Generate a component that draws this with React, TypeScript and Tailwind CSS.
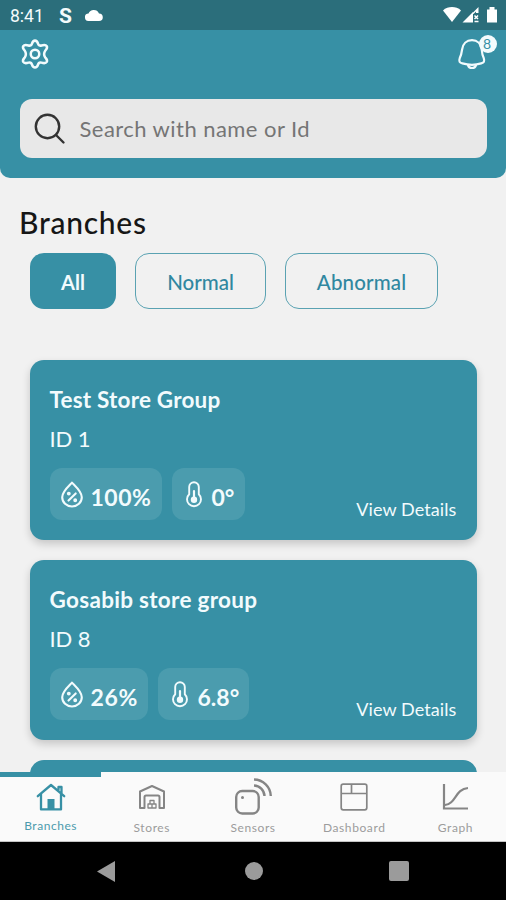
import type { ReactNode } from 'react';

function Gear() {
  return (
    <svg className="h-[32px] w-[32px]" viewBox="-0.5 -0.5 33 33" fill="none" stroke="#f2fbfd" strokeWidth="2.6" strokeLinejoin="round">
      <path d="M16 2.2 C17.8 2.2 18.6 3.6 19.1 5.2 C19.6 6.9 21 7.7 22.7 7.2 C25 6.5 27 6.1 28.1 7.9 C29.2 9.8 28 11 26.6 12.5 C25.2 14.6 25.2 17.6 26.6 19.6 C28 21.1 29.2 22.3 28.1 24.2 C27 26 25 25.6 22.7 24.9 C21 24.4 19.6 25.2 19.1 26.9 C18.6 28.5 17.8 29.9 16 29.9 C14.2 29.9 13.4 28.5 12.9 26.9 C12.4 25.2 11 24.4 9.3 24.9 C7 25.6 5 26 3.9 24.2 C2.8 22.3 4 21.1 5.4 19.6 C6.8 17.6 6.8 14.6 5.4 12.5 C4 11 2.8 9.8 3.9 7.9 C5 6.1 7 6.5 9.3 7.2 C11 7.7 12.4 6.9 12.9 5.2 C13.4 3.6 14.2 2.2 16 2.2Z" />
      <circle cx="16" cy="16" r="4.4" />
    </svg>
  );
}

function Bell() {
  return (
    <svg className="h-[32px] w-[30px]" viewBox="0 0 30 32" fill="none" stroke="#f2fbfd" strokeWidth="2.2" strokeLinejoin="round" strokeLinecap="round">
      <path d="M15 2.2C9.4 2.2 5.8 6.2 5.1 11.5C4.6 15.3 4 17.6 2.7 20.3C1.6 23.4 2.6 24.8 5.4 25.4C11 27 19 27 24.2 25.4C27 24.8 27.8 23.4 26.8 20.3C25.4 17.6 25 15.3 24.7 11.5C24 6.2 20.4 2.2 15 2.2Z" />
      <path d="M11 27C11.8 31 18.2 31 19 27" />
    </svg>
  );
}

function Drop() {
  return (
    <svg className="h-[27px] w-[22px] shrink-0" viewBox="0 0 22 27" fill="none" stroke="#f2fbfd" strokeWidth="2.1" strokeLinecap="round" strokeLinejoin="round">
      <path d="M11 1.6C7.8 5 1.2 10.4 1.2 16.2A9.8 9.3 0 0 0 20.8 16.2C20.8 10.4 14.2 5 11 1.6Z" />
      <path d="M7.5 19.6L14.7 12.4" />
      <circle cx="7.8" cy="12.6" r="0.9" />
      <circle cx="14.2" cy="19.3" r="0.9" />
    </svg>
  );
}

function Thermometer() {
  return (
    <svg className="h-[27px] w-[16px] shrink-0" viewBox="0 0 16 27" fill="none" stroke="#f2fbfd" strokeWidth="1.9" strokeLinecap="round">
      <path d="M3.2 6A4.8 4.8 0 0 1 12.8 6V13.2A7 7 0 1 1 3.2 13.2Z" />
      <path d="M8 10V18" strokeWidth="2.2" />
      <circle cx="8" cy="18.8" r="3.2" fill="#f2fbfd" stroke="none" />
    </svg>
  );
}

function Chip({ icon, className, children }: { icon: ReactNode; className: string; children: ReactNode }) {
  return (
    <div className={'flex h-[52px] items-center rounded-xl bg-[#4b9cae] ' + className}>
      {icon}
      <span className="pt-[5px] text-[23px] leading-6 font-bold">{children}</span>
    </div>
  );
}

function Card({ name, id, chips }: { name: ReactNode; id: string; chips?: ReactNode }) {
  return (
    <article className="flex h-[180px] shrink-0 flex-col rounded-[14px] bg-[#3790a5] px-5 pt-6 text-[#f2fbfd] shadow-[0_4px_9px_rgba(0,0,0,0.18)]">
      {name}
      <p className="mt-[10px] text-[22px] leading-[30px] tracking-[-0.1px]">{id}</p>
      <div className="mt-[14px] flex gap-[10px]">
        {chips}
        <span className="mt-[31px] ml-auto text-[18px] leading-5 tracking-[0.1px]">View Details</span>
      </div>
    </article>
  );
}

function Tab({ label, active, children }: { label: string; active?: boolean; children: ReactNode }) {
  return (
    <div className={active ? 'flex flex-1 flex-col items-center border-t-[5px] border-[#3790a5] text-[#3790a5]' : 'flex flex-1 flex-col items-center pt-[5px] text-[#858585]'}>
      <div className="flex h-[39px] items-center">{children}</div>
      <span className={active ? 'mt-[2px] text-[12px] leading-4 tracking-[0.55px] text-[#4c9bad]' : 'mt-1 text-[12px] leading-4 tracking-[0.6px] text-[#9c9c9c]'}>{label}</span>
    </div>
  );
}

export default function App() {
  return (
    <div className="flex h-[900px] w-[506px] flex-col overflow-hidden bg-[#f1f1f1] font-['Lato',sans-serif]">
      <header className="h-[178px] shrink-0 overflow-hidden rounded-b-[10px] bg-[#3790a5]">
        <div className="flex h-[30px] items-center bg-[#2b6e7b] pl-[10px] font-['Roboto',sans-serif] text-[#f4fbfc]">
          <span className="w-[49px] pt-[2px] text-[17.5px] leading-6">8:41</span>
          <span className="w-[26px] pt-px text-[21px] leading-6 font-bold">S</span>
          <svg className="h-[12px] w-[18px]" viewBox="0 0 18 12" fill="#fff"><path d="M3.8 12A3.7 3.7 0 0 1 3.5 4.6A5.7 5.7 0 0 1 14 4.4A3.8 3.8 0 0 1 14 12Z" /></svg>
          <svg className="ml-auto h-[18px] w-[63px]" viewBox="0 0 63 18" fill="#fff">
            <path d="M0 4.4C5 0 13 0 18 4.4L9 16Z" />
            <path d="M19.5 16.5L30 6V16.5Z" />
            <path d="M29 7.5L35.5 1V7H33V5.5L30.5 8Z" />
            <path d="M31.5 9.5L35 13M35 9.5L31.5 13M31.5 15.5H35.5" stroke="#fff" strokeWidth="1.5" />
            <path d="M44 3.5H46.5V1H51.5V3.5H54V16.5H44Z" />
          </svg>
        </div>
        <div className="flex h-[69px] items-start justify-between pt-2 pr-[19px] pl-[19px]">
          <Gear />
          <div className="relative">
            <Bell />
            <span className="absolute -top-[3px] left-[22px] flex h-[18px] w-[18px] items-center justify-center rounded-full bg-[#f2fbfd] pr-[2px] text-[14px] leading-none text-[#3790a5]">8</span>
          </div>
        </div>
        <div className="mx-[19.5px] flex h-[59px] items-center rounded-xl bg-[#e8e8e8] pl-[14px]">
          <svg className="h-[32px] w-[32px]" viewBox="0 0 32 32" fill="none" stroke="#333" strokeWidth="2.4" strokeLinecap="round"><circle cx="13.5" cy="13.5" r="11.7" /><path d="M22 22L29.5 29.5" /></svg>
          <span className="ml-[14px] text-[22px] leading-7 tracking-[0.45px] text-[#757575]">Search with name or Id</span>
        </div>
      </header>
      <main className="flex min-h-0 flex-1 flex-col overflow-hidden">
        <h1 className="mt-7 ml-[19px] shrink-0 text-[30px] leading-8 font-medium tracking-[0.75px] text-[#161616]">Branches</h1>
        <div className="mt-[15px] ml-[30px] flex shrink-0 gap-[19px] text-[20.5px] leading-6 text-[#3087a0]">
          <div className="flex h-[56px] w-[86px] items-center justify-center rounded-[14px] bg-[#3790a5] pt-[2px] text-[20px] font-bold text-[#f2fbfd]">All</div>
          <div className="flex h-[56px] w-[131px] items-center justify-center rounded-[14px] border border-[#5aa2b2] pt-[2px] font-medium">Normal</div>
          <div className="flex h-[56px] w-[153px] items-center justify-center rounded-[14px] border border-[#5aa2b2] pt-[2px] font-medium tracking-[0.15px]">Abnormal</div>
        </div>
        <section className="mx-[29.5px] mt-[51px] flex flex-col gap-5">
          <Card
            name={<h2 className="text-[22.5px] leading-[31px] -mb-px font-bold tracking-[0.2px]">Test Store Group</h2>}
            id="ID 1"
            chips={<>
              <Chip className="w-[112px] gap-[8px] pl-[11px] tracking-[0.5px]" icon={<Drop />}>100%</Chip>
              <Chip className="w-[73px] gap-[10px] pl-[14px]" icon={<Thermometer />}>0°</Chip>
            </>}
          />
          <Card
            name={<h2 className="text-[22.5px] leading-[31px] -mb-px font-bold tracking-[0.3px]">Gosabib store group</h2>}
            id="ID 8"
            chips={<>
              <Chip className="w-[98px] gap-[8px] pl-[11px] tracking-[0.6px]" icon={<Drop />}>26%</Chip>
              <Chip className="w-[91px] gap-[10px] pl-[14px]" icon={<Thermometer />}>6.8°</Chip>
            </>}
          />
          <div className="h-10 shrink-0 rounded-t-[14px] bg-[#3790a5]" />
        </section>
      </main>
      <nav className="flex h-[70px] shrink-0 border-b border-[#c4c4c4] bg-[#fafafa]">
        <Tab label="Branches" active>
          <svg className="h-[28px] w-[30px]" viewBox="0 0 30 28" fill="none" stroke="currentColor" strokeWidth="2.3" strokeLinecap="round" strokeLinejoin="round">
            <path d="M1.8 13.2L15 2L28.2 13.2M5 11V26.4H25V11M22.5 7V4H25.5V10" />
            <path d="M11.5 26V16H18.5V26Z" fill="currentColor" stroke="none" />
          </svg>
        </Tab>
        <Tab label="Stores">
          <svg className="h-[26px] w-[28px]" viewBox="0 0 28 26" fill="none" stroke="currentColor" strokeWidth="2" strokeLinejoin="round">
            <path d="M2 24V7.5L14 2L26 7.5V24H21.5V13.2Q21.5 11.5 20 11.5H8Q6.5 11.5 6.5 13.2V24Z" />
            <path d="M10 24.5V20H18V24.5M12 20V16.5H16V20M14 20V24M10 24H18" strokeWidth="1.3" />
          </svg>
        </Tab>
        <Tab label="Sensors">
          <svg className="h-[39px] w-[40px]" viewBox="0 0 40 39" fill="none" stroke="currentColor" strokeWidth="2.4">
            <rect x="3.2" y="14" width="22.5" height="22.5" rx="6" />
            <circle cx="9.5" cy="20.5" r="1.5" fill="currentColor" stroke="none" />
            <path d="M21 8.5A11 11 0 0 1 31.5 19M21 2.5A17 17 0 0 1 37.8 19" />
          </svg>
        </Tab>
        <Tab label="Dashboard">
          <svg className="h-[28px] w-[28px]" viewBox="0 0 28 28" fill="none" stroke="currentColor" strokeWidth="1.7"><rect x="1.2" y="1.2" width="25.6" height="25.6" rx="2" /><path d="M1 10.5H27M11.5 1V10.5" /></svg>
        </Tab>
        <Tab label="Graph">
          <svg className="h-[28px] w-[28px]" viewBox="0 0 28 28" fill="none" stroke="currentColor" strokeWidth="2.2"><path d="M3 1V25.5H27M4 22C15 21 14 6 27 5" /></svg>
        </Tab>
      </nav>
      <footer className="flex h-[58px] shrink-0 items-center bg-black pl-[97px]">
        <svg className="h-[21px] w-[18px]" viewBox="0 0 18 21" fill="#9b9b9b"><path d="M0 10.5L18 0V21Z" /></svg>
        <span className="ml-[130px] h-[18px] w-[18px] rounded-full bg-[#9b9b9b]" />
        <span className="ml-[126px] h-[20px] w-[20px] rounded-[2px] bg-[#9b9b9b]" />
      </footer>
    </div>
  );
}
